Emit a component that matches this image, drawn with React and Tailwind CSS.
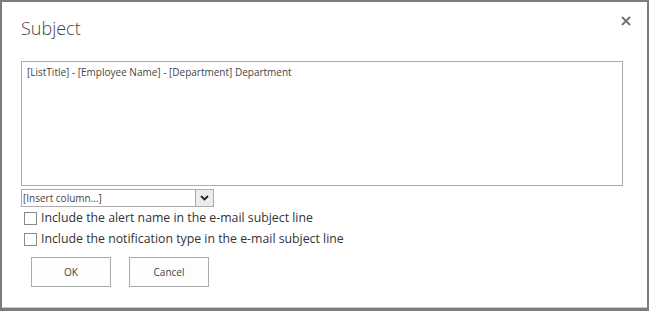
import React, { useState } from 'react'

const font = { fontFamily: '"Open Sans", "Noto Sans", sans-serif' }

const CheckRow = ({ label, checked, onToggle }) => (
  <label className="flex items-center h-[21px] pl-[3px] cursor-pointer">
    <span
      onClick={onToggle}
      className="w-[13px] h-[13px] border border-[#8a8a8a] bg-white flex items-center justify-center"
    >
      {checked && <span className="w-[7px] h-[7px] bg-[#444]" />}
    </span>
    <span className="ml-[4px] text-[12.3px] text-[#333] leading-none">{label}</span>
  </label>
)

export default function App() {
  const [alertName, setAlertName] = useState(false)
  const [notifType, setNotifType] = useState(false)

  return (
    <div className="w-[649px] h-[311px] bg-[#7c7c7c] pt-[2px] px-[2px] pb-[3px]" style={font}>
      <div className="bg-white h-full border-b border-[#c9c9c9] flex flex-col pl-[19px]">
        <div className="flex items-start justify-between h-[59px]">
          <h1 className="mt-[14px] text-[18px] leading-[24px] font-light text-[#444]">Subject</h1>
          <button className="mt-[13px] mr-[15px] w-[12px] h-[12px] flex items-center justify-center text-[#707070]">
            <svg width="10" height="10" viewBox="0 0 10 10">
              <path d="M1 1 L9 9 M9 1 L1 9" stroke="currentColor" strokeWidth="1.8" fill="none" />
            </svg>
          </button>
        </div>

        <div className="w-[602px] h-[125px] border border-[#ababab] pl-[5px] pt-[3px] text-[10px] leading-[14px] text-[#444]">
          [ListTitle] - [Employee Name] - [Department] Department
        </div>

        <div className="mt-[3px] w-[193px] h-[18px] border border-[#ababab] flex items-center">
          <span className="flex-1 pl-[1px] text-[10px] leading-none text-[#444]">[Insert column...]</span>
          <span className="w-[18px] h-full border-l border-[#ababab] bg-[#ececec] flex items-center justify-center">
            <svg width="9" height="6" viewBox="0 0 9 6">
              <path d="M1 1 L4.5 4.5 L8 1" stroke="#222" strokeWidth="1.8" fill="none" />
            </svg>
          </span>
        </div>

        <div className="mt-[1px] flex flex-col">
          <CheckRow
            label="Include the alert name in the e-mail subject line"
            checked={alertName}
            onToggle={() => setAlertName(v => !v)}
          />
          <CheckRow
            label="Include the notification type in the e-mail subject line"
            checked={notifType}
            onToggle={() => setNotifType(v => !v)}
          />
        </div>

        <div className="mt-[7px] ml-[10px] flex gap-[18px]">
          <button className="w-[80px] h-[30px] border border-[#ababab] bg-[#fdfdfd] text-[10px] text-[#444]">OK</button>
          <button className="w-[80px] h-[30px] border border-[#ababab] bg-[#fdfdfd] text-[10px] text-[#444]">Cancel</button>
        </div>
      </div>
    </div>
  )
}
